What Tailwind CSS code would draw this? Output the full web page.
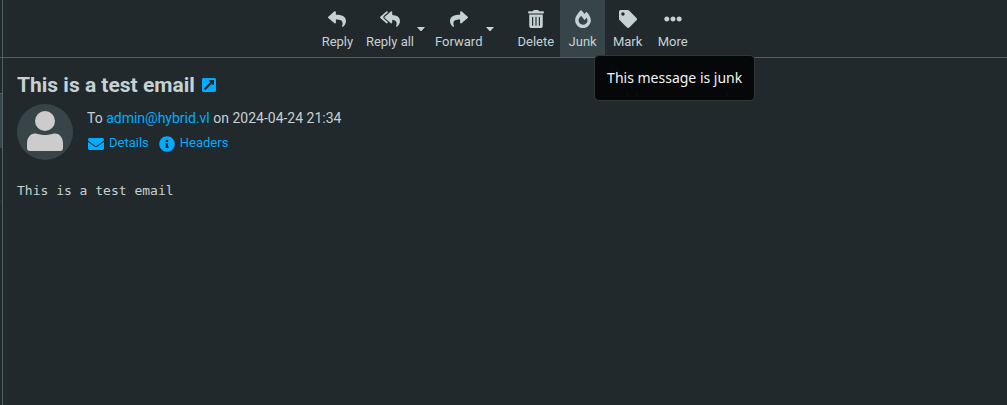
<!DOCTYPE html>
<html lang="en">
<head>
<meta charset="utf-8">
<meta name="viewport" content="width=device-width, initial-scale=1">
<title>This is a test email</title>
<script src="https://cdn.jsdelivr.net/npm/@tailwindcss/browser@4"></script>
</head>
<body class="flex min-h-screen bg-[#21292c] font-['Roboto',sans-serif] text-sm text-[#c5d1d3]">
  <!-- Edge of the message list -->
  <aside class="flex w-[3px] shrink-0 flex-col border-r border-[#4d6066]">
    <div class="h-[58px] border-b border-[#4d6066]"></div>
    <div class="h-9 border-b border-[#4d6066]"></div>
    <div class="h-[54px] bg-[#374549]"></div>
    <div class="h-[54px] border-b border-[#2c373a]"></div>
  </aside>

  <main class="min-w-0 flex-1">
    <nav aria-label="Message actions" class="flex h-[58px] justify-center border-b border-[#4d6066] text-[13px] leading-5">
      <button type="button" class="flex min-w-[45px] flex-col items-center gap-1 px-1.5 pt-2.5">
        <svg class="h-[18px] w-[18px]" viewBox="0 0 512 512" fill="currentColor" aria-hidden="true"><path d="M8.309 189.836L184.313 37.851C199.719 24.546 224 35.347 224 56.015v80.053c160.629 1.839 288 34.032 288 186.258 0 61.441-39.581 122.309-83.333 154.132-13.653 9.931-33.111-2.533-28.077-18.631 45.344-145.012-21.507-183.51-176.59-185.742V360c0 20.7-24.3 31.453-39.687 18.164l-176.004-152c-11.071-9.562-11.086-26.753 0-36.328z"/></svg>
        <span>Reply</span>
      </button>
      <button type="button" class="flex flex-col items-center gap-1 pt-2.5 pr-[3px] pl-1.5">
        <svg class="h-[18px] w-5" viewBox="0 0 576 512" fill="currentColor" aria-hidden="true"><path d="M136.309 189.836L312.313 37.851C327.72 24.546 352 35.348 352 56.015v82.763c129.182 10.231 224 52.212 224 183.548 0 61.441-39.582 122.309-83.333 154.132-13.653 9.931-33.111-2.533-28.077-18.631 38.512-123.162-3.922-169.482-112.59-182.015v84.175c0 20.701-24.3 31.453-39.687 18.164L136.309 226.164c-11.071-9.561-11.086-26.753 0-36.328zm-128 36.328L184.313 378.15C199.7 391.439 224 380.687 224 359.986v-15.818l-108.606-93.785A55.96 55.96 0 0 1 96 207.998a55.953 55.953 0 0 1 19.393-42.38L224 71.832V56.015c0-20.667-24.28-31.469-39.687-18.164L8.309 189.836c-11.086 9.575-11.071 26.767 0 36.328z"/></svg>
        <span>Reply all</span>
      </button>
      <button type="button" aria-label="Reply-all options" class="flex w-3 items-center">
        <svg class="h-1 w-2" viewBox="0 0 8 4" fill="currentColor" aria-hidden="true"><path d="M0 0h8L4.500 4h-1z"/></svg>
      </button>
      <button type="button" class="flex flex-col items-center gap-1 pt-2.5 pr-1 pl-1.5">
        <svg class="h-[18px] w-[18px] -scale-x-100" viewBox="0 0 512 512" fill="currentColor" aria-hidden="true"><path d="M8.309 189.836L184.313 37.851C199.719 24.546 224 35.347 224 56.015v80.053c160.629 1.839 288 34.032 288 186.258 0 61.441-39.581 122.309-83.333 154.132-13.653 9.931-33.111-2.533-28.077-18.631 45.344-145.012-21.507-183.51-176.59-185.742V360c0 20.7-24.3 31.453-39.687 18.164l-176.004-152c-11.071-9.562-11.086-26.753 0-36.328z"/></svg>
        <span>Forward</span>
      </button>
      <button type="button" aria-label="Forward options" class="mr-[13px] flex w-3 items-center">
        <svg class="h-1 w-2" viewBox="0 0 8 4" fill="currentColor" aria-hidden="true"><path d="M0 0h8L4.500 4h-1z"/></svg>
      </button>
      <button type="button" class="flex flex-col items-center gap-1 px-1.5 pt-2.5">
        <svg class="h-[18px] w-4" viewBox="0 0 448 512" fill="currentColor" aria-hidden="true"><path d="M32 464a48 48 0 0 0 48 48h288a48 48 0 0 0 48-48V128H32zm272-256a16 16 0 0 1 32 0v224a16 16 0 0 1-32 0zm-96 0a16 16 0 0 1 32 0v224a16 16 0 0 1-32 0zm-96 0a16 16 0 0 1 32 0v224a16 16 0 0 1-32 0zM432 32H312l-9.400-18.700A24 24 0 0 0 281.100 0H166.800a23.720 23.720 0 0 0-21.400 13.300L136 32H16A16 16 0 0 0 0 48v32a16 16 0 0 0 16 16h416a16 16 0 0 0 16-16V48a16 16 0 0 0-16-16z"/></svg>
        <span>Delete</span>
      </button>
      <div class="relative flex">
        <button type="button" aria-describedby="junk-tip" class="flex min-w-[45px] flex-col items-center gap-1 bg-[#374549] px-1.5 pt-2.5">
          <svg class="h-[18px] w-4" viewBox="0 0 448 512" fill="currentColor" aria-hidden="true"><path d="M323.560 51.200c-20.800 19.300-39.580 39.590-56.220 59.970C240.080 73.620 206.280 35.530 168 0 69.740 91.170 0 209.960 0 281.600 0 408.850 100.290 512 224 512s224-103.150 224-230.400c0-53.270-51.980-163.140-124.440-230.400zm-19.470 340.650C282.430 407.010 255.720 416 226.860 416 154.710 416 96 368.260 96 290.750c0-38.610 24.310-72.630 72.790-130.750 6.930 7.980 98.830 125.340 98.830 125.340l58.630-66.880c4.140 6.850 7.910 13.550 11.270 19.970 27.350 52.190 15.810 118.970-33.430 153.420z"/></svg>
          <span>Junk</span>
        </button>
        <div id="junk-tip" role="tooltip" class="absolute top-[55px] left-[34px] z-10 rounded-[5px] border border-[#2f3739] bg-[#060708] px-3 py-[11px] font-['Noto_Sans',sans-serif] text-sm leading-[22px] whitespace-nowrap text-[#f4f4f4]">This message is junk</div>
      </div>
      <button type="button" class="flex min-w-[45px] flex-col items-center gap-1 px-1.5 pt-2.5">
        <svg class="h-[18px] w-[18px]" viewBox="0 0 512 512" fill="currentColor" aria-hidden="true"><path d="M0 252.118V48C0 21.490 21.490 0 48 0h204.118a48 48 0 0 1 33.941 14.059l211.882 211.882c18.745 18.745 18.745 49.137 0 67.882L293.823 497.941c-18.745 18.745-49.137 18.745-67.882 0L14.059 286.059A48 48 0 0 1 0 252.118zM112 64c-26.510 0-48 21.490-48 48s21.490 48 48 48 48-21.490 48-48-21.490-48-48-48z"/></svg>
        <span>Mark</span>
      </button>
      <button type="button" class="flex min-w-[45px] flex-col items-center gap-1 px-1.5 pt-2.5">
        <svg class="h-[18px] w-[18px]" viewBox="0 0 512 512" fill="currentColor" aria-hidden="true"><path d="M328 256c0 39.800-32.200 72-72 72s-72-32.200-72-72 32.200-72 72-72 72 32.200 72 72zm104-72c-39.800 0-72 32.200-72 72s32.200 72 72 72 72-32.200 72-72-32.200-72-72-72zm-352 0c-39.800 0-72 32.200-72 72s32.200 72 72 72 72-32.200 72-72-32.200-72-72-72z"/></svg>
        <span>More</span>
      </button>
    </nav>

    <article class="px-3.5 pt-[13px]">
      <header>
        <h1 class="flex items-center gap-[7px] text-[21px] leading-7 font-bold">
          This is a test email
          <a href="#open" aria-label="Open in new window" class="text-[#00acff]">
            <svg class="h-4 w-3.5" viewBox="0 0 448 512" fill="currentColor" aria-hidden="true"><path d="M448 80v352c0 26.510-21.490 48-48 48H48c-26.510 0-48-21.490-48-48V80c0-26.510 21.490-48 48-48h352c26.510 0 48 21.490 48 48zm-88 16H248.029c-21.313 0-32.080 25.861-16.971 40.971l31.984 31.987L67.515 364.485c-4.686 4.686-4.686 12.284 0 16.971l31.029 31.029c4.687 4.686 12.285 4.686 16.971 0l195.526-195.526 31.988 31.991C358.058 263.977 384 253.425 384 231.979V120c0-13.255-10.745-24-24-24z"/></svg>
          </a>
        </h1>
        <div class="mt-[5px] flex gap-3.5">
          <div class="size-14 shrink-0 overflow-hidden rounded-full bg-[#374549]">
            <svg class="size-14" viewBox="0 0 56 56" fill="#cccccc" role="img" aria-label="Contact photo"><circle cx="28" cy="17" r="10"/><path d="M18 29.500c2.500 0 5 1.500 10 1.500s7.500-1.500 10-1.500c5 0 8 4.500 8 10V44q0 3-3 3H13q-3 0-3-3v-4.500c0-5.500 3-10 8-10z"/></svg>
          </div>
          <div class="pt-1">
            <p class="leading-5">To <a href="mailto:admin@hybrid.vl" class="text-[#00acff]">admin@hybrid.vl</a> on 2024-04-24 21:34</p>
            <div class="mt-[5px] flex gap-[9px] text-[13px] leading-5 text-[#00acff]">
              <a href="#details" class="flex gap-1"><svg class="mt-0.5 size-[18px] px-px" viewBox="0 0 512 512" fill="currentColor" aria-hidden="true"><path d="M502.300 190.800c3.900-3.100 9.700-.2 9.700 4.700V400c0 26.500-21.500 48-48 48H48c-26.500 0-48-21.500-48-48V195.600c0-5 5.700-7.800 9.700-4.700 22.400 17.400 52.100 39.500 154.100 113.600 21.100 15.400 56.700 47.800 92.200 47.600 35.700.3 72-32.800 92.300-47.600 102-74.100 131.600-96.300 154-113.700zM256 320c23.200.4 56.600-29.200 73.400-41.400 132.700-96.300 142.800-104.700 173.400-128.700 5.800-4.500 9.200-11.500 9.200-18.900v-19c0-26.500-21.500-48-48-48H48c-26.500 0-48 21.500-48 48v19c0 7.400 3.400 14.300 9.200 18.900 30.600 23.900 40.700 32.400 173.400 128.700 16.800 12.200 50.200 41.800 73.400 41.400z"/></svg>Details</a>
              <a href="#headers" class="flex gap-1"><svg class="mt-0.5 size-[18px] px-px" viewBox="0 0 512 512" fill="currentColor" aria-hidden="true"><path d="M256 8C119.043 8 8 119.083 8 256c0 136.997 111.043 248 248 248s248-111.003 248-248C504 119.083 392.957 8 256 8zm0 110c23.196 0 42 18.804 42 42s-18.804 42-42 42-42-18.804-42-42 18.804-42 42-42zm56 254c0 6.627-5.373 12-12 12h-88c-6.627 0-12-5.373-12-12v-24c0-6.627 5.373-12 12-12h12v-64h-12c-6.627 0-12-5.373-12-12v-24c0-6.627 5.373-12 12-12h64c6.627 0 12 5.373 12 12v100h12c6.627 0 12 5.373 12 12v24z"/></svg>Headers</a>
            </div>
          </div>
        </div>
      </header>
      <pre class="mt-[21px] font-['DejaVu_Sans_Mono',monospace] text-[13px] leading-5">This is a test email</pre>
    </article>
  </main>
</body>
</html>
